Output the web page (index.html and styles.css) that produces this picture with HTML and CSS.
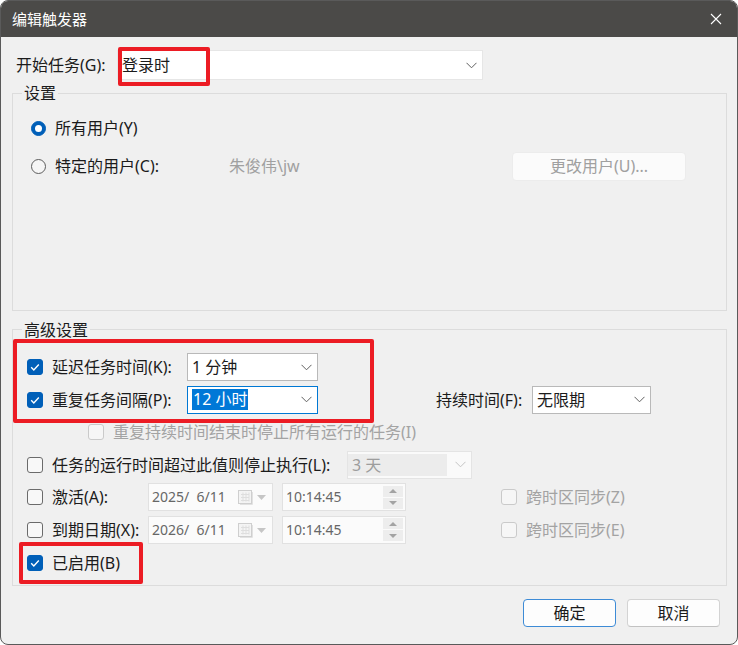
FILE: index.html
```html
<!DOCTYPE html>
<html lang="zh-CN">
<head>
<meta charset="utf-8">
<title>编辑触发器</title>
<link rel="stylesheet" href="styles.css">
</head>
<body>
<div class="window">
  <div class="titlebar">
    <span class="title">编辑触发器</span>
    <svg class="close" width="12" height="12" viewBox="0 0 12 12"><path d="M1 1L11 11M11 1L1 11" stroke="#fff" stroke-width="1.1" fill="none"/></svg>
  </div>
  <div class="content">
    <div class="begin-row">
      <span class="begin-lbl">开始任务(G):</span>
      <div class="combo combo-begin"><span class="val">登录时</span><svg class="chev" width="11" height="7" viewBox="0 0 11 7"><path d="M0.5 0.8L5.5 5.8L10.5 0.8" stroke="#5f5f5f" fill="none"/></svg></div>
    </div>

    <fieldset class="group settings">
      <legend>设置</legend>
      <div class="settings-inner">
        <div class="radio-row"><span class="radio on"></span><span>所有用户(Y)</span></div>
        <div class="radio-row r2">
          <span class="radio"></span>
          <span class="user-lbl">特定的用户(C):</span>
          <span class="user dis">朱俊伟\jw</span>
          <button class="btn-change">更改用户(U)...</button>
        </div>
      </div>
    </fieldset>

    <fieldset class="group advanced">
      <legend>高级设置</legend>
      <div class="adv-inner">
        <div class="arow">
          <label class="chk w160"><span class="cb on"><svg width="16" height="16" viewBox="0 0 16 16"><path d="M4.2 8.3l2.6 2.6l5-5.3" stroke="#fff" stroke-width="1.4" fill="none"/></svg></span>延迟任务时间(K):</label>
          <div class="combo w131 dark"><span class="val">1 分钟</span><svg class="chev" width="11" height="7" viewBox="0 0 11 7"><path d="M0.5 0.8L5.5 5.8L10.5 0.8" stroke="#5f5f5f" fill="none"/></svg></div>
        </div>
        <div class="arow">
          <label class="chk w160"><span class="cb on"><svg width="16" height="16" viewBox="0 0 16 16"><path d="M4.2 8.3l2.6 2.6l5-5.3" stroke="#fff" stroke-width="1.4" fill="none"/></svg></span>重复任务间隔(P):</label>
          <div class="combo w131 focus"><span class="val sel">12 小时</span><svg class="chev" width="11" height="7" viewBox="0 0 11 7"><path d="M0.5 0.8L5.5 5.8L10.5 0.8" stroke="#5f5f5f" fill="none"/></svg></div>
          <span class="dur-lbl">持续时间(F):</span>
          <div class="combo w119 dark"><span class="val">无限期</span><svg class="chev" width="11" height="7" viewBox="0 0 11 7"><path d="M0.5 0.8L5.5 5.8L10.5 0.8" stroke="#5f5f5f" fill="none"/></svg></div>
        </div>
        <div class="arow">
          <label class="chk dis ind61"><span class="cb"></span>重复持续时间结束时停止所有运行的任务(I)</label>
        </div>
        <div class="arow">
          <label class="chk w320"><span class="cb"></span>任务的运行时间超过此值则停止执行(L):</label>
          <div class="combo w125 disabled"><span class="val">3 天</span><svg class="chev" width="11" height="7" viewBox="0 0 11 7"><path d="M0.5 0.8L5.5 5.8L10.5 0.8" stroke="#c4c4c4" fill="none"/></svg></div>
        </div>
        <div class="arow">
          <label class="chk w121"><span class="cb"></span>激活(A):</label>
          <div class="date"><span class="dval">2025/  6/11</span><svg class="cal" width="32" height="18" viewBox="0 0 32 18"><rect x="1.5" y="2.5" width="13" height="13" fill="#f4f4f4" stroke="#cfcfcf"/><path d="M15.5 4v12.5H3" stroke="#e2e2e2" fill="none"/><path d="M4 6.5h8M4 9.5h8M4 12.5h8M6 4.5v9M9 4.5v9M12 4.5v9" stroke="#dedede" fill="none"/><path d="M20 7h9l-4.5 5z" fill="#c6c6c6"/></svg></div>
          <div class="time"><span class="dval">10:14:45</span><span class="spin"><span class="up"></span><span class="down"></span></span></div>
          <label class="chk dis ml95"><span class="cb"></span>跨时区同步(Z)</label>
        </div>
        <div class="arow">
          <label class="chk w121"><span class="cb"></span>到期日期(X):</label>
          <div class="date"><span class="dval">2026/  6/11</span><svg class="cal" width="32" height="18" viewBox="0 0 32 18"><rect x="1.5" y="2.5" width="13" height="13" fill="#f4f4f4" stroke="#cfcfcf"/><path d="M15.5 4v12.5H3" stroke="#e2e2e2" fill="none"/><path d="M4 6.5h8M4 9.5h8M4 12.5h8M6 4.5v9M9 4.5v9M12 4.5v9" stroke="#dedede" fill="none"/><path d="M20 7h9l-4.5 5z" fill="#c6c6c6"/></svg></div>
          <div class="time"><span class="dval">10:14:45</span><span class="spin"><span class="up"></span><span class="down"></span></span></div>
          <label class="chk dis ml95"><span class="cb"></span>跨时区同步(E)</label>
        </div>
        <div class="arow last">
          <label class="chk"><span class="cb on"><svg width="16" height="16" viewBox="0 0 16 16"><path d="M4.2 8.3l2.6 2.6l5-5.3" stroke="#fff" stroke-width="1.4" fill="none"/></svg></span>已启用(B)</label>
        </div>
      </div>
    </fieldset>

    <div class="actions">
      <button class="btn primary">确定</button>
      <button class="btn">取消</button>
    </div>
  </div>

  <div class="mark mark-begin"></div>
  <div class="mark mark-repeat"></div>
  <div class="mark mark-enabled"></div>
</div>
</body>
</html>
```

FILE: styles.css
```css
* { box-sizing: border-box; }
html, body { margin: 0; padding: 0; }
body {
  background: #ffffff;
  font-family: "Noto Sans", "Noto Sans CJK SC", sans-serif;
  font-size: 16px;
  line-height: 20px;
  color: #1b1b1b;
}
.window {
  position: relative;
  width: 738px;
  height: 645px;
  border: 1px solid #5a5a5a;
  border-radius: 8px;
  background: #f0f0f0;
  overflow: hidden;
}
.titlebar {
  height: 36px;
  background: #4b4a48;
  display: flex;
  align-items: center;
  justify-content: space-between;
  padding: 0 15px 0 11px;
}
.title { color: #fff; font-size: 15px; }
.close { display: block; }

.content { padding: 0 10px 0 11px; }

.begin-row {
  display: flex;
  align-items: center;
  height: 30px;
  margin-top: 13px;
  padding-left: 4px;
}
.begin-lbl { width: 101px; flex: none; }

.combo {
  display: flex;
  align-items: center;
  justify-content: space-between;
  height: 28px;
  background: #fff;
  border: 1px solid #e3e3e3;
  padding: 0 5px 0 4px;
  flex: none;
}
.combo-begin { width: 366px; height: 30px; border-color: #e6e6e6; }
.combo.dark { border-color: #b9b9b9; }
.combo.focus { border-color: #0078d4; }
.chev { display: block; flex: none; }
.val { white-space: nowrap; }
.sel {
  background: #0078d7;
  color: #fff;
  line-height: 21px;
  padding: 0 1px;
  display: inline-block;
}
.w131 { width: 131px; }
.w119 { width: 119px; }
.w125 { width: 125px; }
.combo.disabled {
  background: #fafafa;
  border-color: #e4e4e4;
  padding: 2px 5px 2px 0;
  color: #9d9d9d;
}
.combo.disabled .val {
  background: #ececec;
  width: 99px;
  height: 22px;
  line-height: 22px;
  padding-left: 4px;
}

fieldset.group {
  margin: 0;
  padding: 0;
  border: 1px solid #dcdcdc;
  min-width: 0;
}
.group legend {
  margin-left: 9px;
  padding: 0 2px;
  line-height: 20px;
}
fieldset.settings { margin-top: 3px; height: 228px; }
.settings-inner { padding: 15px 0 0 18px; }
.radio-row { display: flex; align-items: center; height: 20px; }
.radio-row.r2 { margin-top: 13px; height: 30px; }
.radio {
  width: 15px;
  height: 15px;
  border-radius: 50%;
  border: 1px solid #5d5d5d;
  background: #f6f6f6;
  margin-right: 9px;
  flex: none;
  display: flex;
  align-items: center;
  justify-content: center;
}
.radio.on { background: #005fb8; border-color: #005fb8; }
.radio.on::after {
  content: "";
  width: 7px;
  height: 7px;
  border-radius: 50%;
  background: #fff;
}
.user-lbl { width: 174px; flex: none; }
.user { width: 283px; flex: none; }
.dis { color: #a0a0a0; }
.btn-change {
  width: 174px;
  height: 29px;
  font: inherit;
  color: #a0a0a0;
  background: #fbfbfb;
  border: 1px solid #ececec;
  border-radius: 4px;
  padding: 0;
}

fieldset.advanced { margin-top: 8.5px; height: 266.5px; }
.adv-inner {
  padding: 13.5px 0 0 14px;
  display: grid;
  grid-auto-rows: 28px;
  row-gap: 4.5px;
}
.arow { display: flex; align-items: center; }
.arow.last { margin-top: 2px; }
.chk {
  display: flex;
  align-items: center;
  white-space: nowrap;
  flex: none;
}
.cb {
  width: 16px;
  height: 16px;
  border: 1px solid #6b6b6b;
  border-radius: 3px;
  background: #f8f8f8;
  margin-right: 9px;
  flex: none;
}
.cb svg { display: block; margin: -1px; }
.cb.on { background: #005fb8; border-color: #005fb8; }
.chk.dis { color: #a3a3a3; }
.chk.dis .cb { border-color: #cacaca; background: #f6f6f6; }
.w160 { width: 160px; }
.w320 { width: 320px; }
.w121 { width: 121px; }
.ind61 { margin-left: 61px; }
.ml95 { margin-left: 95px; }
.dur-lbl { margin-left: 118px; width: 96px; flex: none; }

.date, .time {
  display: flex;
  align-items: center;
  height: 28px;
  background: #fbfbfb;
  border: 1px solid #e1e1e1;
  flex: none;
  color: #676767;
  font-size: 14px;
}
.date { width: 125px; padding-left: 3px; justify-content: space-between; padding-right: 3px; }
.time { width: 124px; margin-left: 9px; padding-left: 3px; padding-right: 2px; justify-content: space-between; }
.dval { white-space: pre; }
.cal { display: block; flex: none; }
.spin {
  display: flex;
  flex-direction: column;
  width: 20px;
  height: 23px;
  gap: 1px;
}
.spin span {
  flex: 1;
  background: #ededed;
  display: flex;
  align-items: center;
  justify-content: center;
}
.spin span::after {
  content: "";
  border-left: 4px solid transparent;
  border-right: 4px solid transparent;
}
.spin .up::after { border-bottom: 4px solid #a3a3a3; }
.spin .down::after { border-top: 4px solid #a3a3a3; }

.actions {
  display: flex;
  justify-content: flex-end;
  gap: 11px;
  margin-top: 13px;
  padding-right: 7px;
}
.btn {
  width: 93px;
  height: 28px;
  font: inherit;
  color: #1b1b1b;
  background: #fdfdfd;
  border: 1px solid #d3d3d3;
  border-bottom-color: #c2c2c2;
  border-radius: 4px;
  padding: 0;
}
.btn.primary { border: 1.5px solid #3d8bd6; }

.mark {
  position: absolute;
  border: 4px solid #ec1c24;
  border-radius: 2px;
}
.mark-begin { left: 117px; top: 46px; width: 92px; height: 39px; }
.mark-repeat { left: 12px; top: 338px; width: 361px; height: 84px; }
.mark-enabled { left: 18px; top: 541px; width: 124px; height: 42px; }
```
